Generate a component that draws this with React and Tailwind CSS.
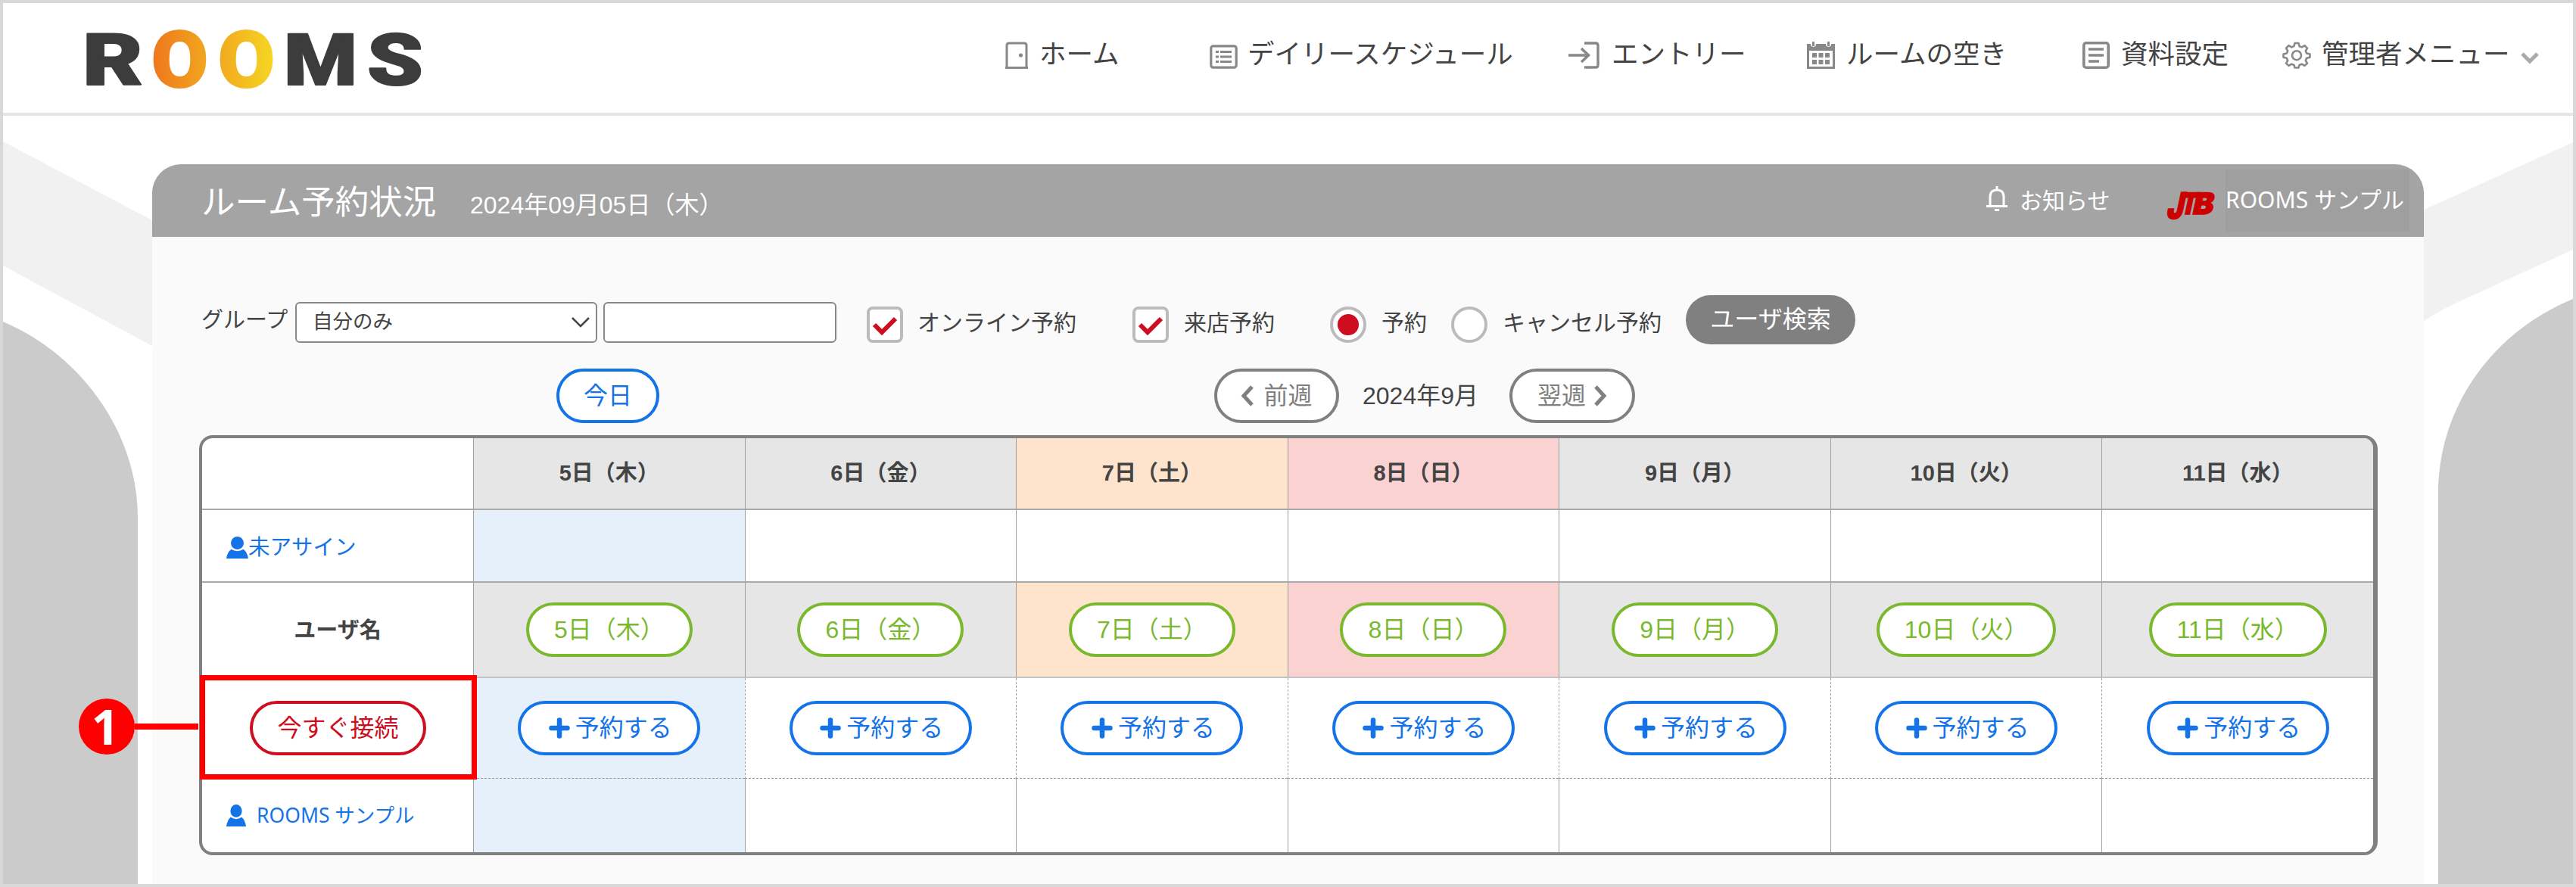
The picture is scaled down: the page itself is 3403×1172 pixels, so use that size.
const jp = "font-['Liberation_Sans','Noto_Sans_CJK_JP',sans-serif]";

const days = [
  { label: '5日（木）', head: 'bg-[#e6e6e6]', body: 'bg-[#e6f0fb]', pill: 'w-[220px]' },
  { label: '6日（金）', head: 'bg-[#e6e6e6]', body: 'bg-white', pill: 'w-[220px]' },
  { label: '7日（土）', head: 'bg-[#fee4cc]', body: 'bg-white', pill: 'w-[220px]' },
  { label: '8日（日）', head: 'bg-[#fad2d2]', body: 'bg-white', pill: 'w-[220px]' },
  { label: '9日（月）', head: 'bg-[#e6e6e6]', body: 'bg-white', pill: 'w-[220px]' },
  { label: '10日（火）', head: 'bg-[#e6e6e6]', body: 'bg-white', pill: 'w-[237px]' },
  { label: '11日（水）', head: 'bg-[#e6e6e6]', body: 'bg-white', pill: 'w-[235px]' },
];

const DoorIcon = () => (
  <svg width="30" height="36" viewBox="0 0 30 36" fill="none" stroke="#888" strokeWidth="3">
    <path d="M2 34.5V5Q2 2 5 2H25Q28 2 28 5V34.5" />
    <path d="M0 34.5H30" />
    <circle cx="20.5" cy="18" r="2.6" fill="#888" stroke="none" />
  </svg>
);

const ListIcon = () => (
  <svg width="37" height="32" viewBox="0 0 37 32" fill="none" stroke="#888" strokeWidth="3.2">
    <rect x="1.8" y="1.8" width="33.4" height="28.4" rx="3" />
    <path d="M8 9.5H12M14 9.5H29M8 16H12M14 16H29M8 22.5H12M14 22.5H29" />
  </svg>
);

const EntryIcon = () => (
  <svg width="41" height="36" viewBox="0 0 41 36" fill="none" stroke="#888" strokeWidth="3.6">
    <path d="M0 18H26M17 9L26.5 18L17 27" />
    <path d="M21 2H36Q39 2 39 5V31Q39 34 36 34H21" strokeWidth="3.4" />
  </svg>
);

const CalendarIcon = () => (
  <svg width="37" height="36" viewBox="0 0 37 36" fill="#888">
    <path fillRule="evenodd" d="M0 3H5V5Q8.5 9 12 5V3H25V5Q28.5 9 32 5V3H37V36H0ZM3 12V33H34V12Z" />
    <path d="M7 0h3v6h-3zM27 0h3v6h-3z" />
    <path d="M7 15h6v6H7zM15.5 15h6v6h-6zM24 15h6v6h-6zM7 24h6v6H7zM15.5 24h6v6h-6zM24 24h6v6h-6z" />
  </svg>
);

const DocIcon = () => (
  <svg width="36" height="36" viewBox="0 0 36 36" fill="none" stroke="#888" strokeWidth="3.6">
    <rect x="1.8" y="1.8" width="32.4" height="32.4" rx="3" />
    <path d="M8 10H28M8 18H28M8 26H22" />
  </svg>
);

const GearIcon = () => (
  <svg width="38" height="36" viewBox="0 0 38 36" fill="none" stroke="#888" strokeWidth="2.6">
    <path
      strokeLinejoin="round"
      d="M16.5 2H21.5L22.5 6L25.8 7.4L29.5 5.2L33 8.6L30.8 12.2L32.2 15.4L36.5 16.4V20.8L32.2 21.8L30.8 25L33 28.6L29.5 31.8L25.8 29.6L22.5 31L21.5 34.5H16.5L15.5 31L12.2 29.6L8.5 31.8L5 28.6L7.2 25L5.8 21.8L1.5 20.8V16.4L5.8 15.4L7.2 12.2L5 8.6L8.5 5.2L12.2 7.4L15.5 6Z"
    />
    <circle cx="19" cy="18.2" r="6" />
  </svg>
);

const PersonIcon = ({ width = 29 }) => (
  <svg width={width} height="29" viewBox="0 0 29 29" preserveAspectRatio="none" fill="#1473e6">
    <circle cx="14.5" cy="8.5" r="8.5" />
    <path d="M0 29Q1.500 20 6.500 16.800Q14.500 21.500 22.500 16.800Q27.500 20 29 29Z" />
  </svg>
);

const nav = [
  { label: 'ホーム', icon: DoorIcon, pos: 'w-[270px]', gap: 'gap-[15px]' },
  { label: 'デイリースケジュール', icon: ListIcon, pos: 'w-[474px]', gap: 'gap-[13px]', shift: 'pt-1' },
  { label: 'エントリー', icon: EntryIcon, pos: 'w-[315px]', gap: 'gap-[16px]' },
  { label: 'ルームの空き', icon: CalendarIcon, pos: 'w-[364px]', gap: 'gap-[15px]' },
  { label: '資料設定', icon: DocIcon, pos: 'w-[264px]', gap: 'gap-[15px]' },
  { label: '管理者メニュー', icon: GearIcon, pos: 'w-[315px]', gap: 'gap-[14px]' },
];

function Logo() {
  return (
    <svg width="700" height="145" viewBox="4 4 700 145" className="shrink-0 overflow-visible" fill="#3c3c3c" stroke="#3c3c3c">
      <defs>
        <linearGradient id="o1" x1="0" x2="1">
          <stop offset="0" stopColor="#ee761c" />
          <stop offset="1" stopColor="#f1a81f" />
        </linearGradient>
        <linearGradient id="o2" x1="0" x2="1">
          <stop offset="0" stopColor="#f1a81f" />
          <stop offset="1" stopColor="#f6d723" />
        </linearGradient>
      </defs>
      <g fontFamily="Roboto" fontWeight="900" fontSize="95" strokeWidth="2" strokeLinejoin="round">
        <text x="109" y="112" textLength="80" lengthAdjust="spacingAndGlyphs">R</text>
        <text x="200" y="115" fontSize="104" textLength="75" lengthAdjust="spacingAndGlyphs" fill="url(#o1)" stroke="url(#o1)">O</text>
        <text x="288" y="115" fontSize="104" textLength="75" lengthAdjust="spacingAndGlyphs" fill="url(#o2)" stroke="url(#o2)">O</text>
        <text x="375" y="112" textLength="97" lengthAdjust="spacingAndGlyphs">M</text>
        <text x="485" y="112" textLength="74" lengthAdjust="spacingAndGlyphs">S</text>
      </g>
    </svg>
  );
}

function Header() {
  return (
    <header className="flex h-[149px] shrink-0 items-start border-b-4 border-[#e5e5e5] bg-white">
      <div className="w-[1324px]"><Logo /></div>
      <nav className="flex h-[138px] items-center text-[35.5px] text-[#444]">
        {nav.map(({ label, icon: Icon, pos, gap, shift }) => (
          <a key={label} className={`flex shrink-0 items-center whitespace-nowrap ${pos} ${gap}`}>
            <span className={`shrink-0 ${shift || ''}`}><Icon /></span>
            <span>{label}</span>
          </a>
        ))}
        <svg width="24" height="16" viewBox="0 0 24 16" fill="none" stroke="#aaa" strokeWidth="5" className="mt-2">
          <path d="M2 2L12 12L22 2" />
        </svg>
      </nav>
    </header>
  );
}

function Backdrop() {
  return (
    <svg className="absolute inset-0" width="3395" height="1015" viewBox="4 153 3395 1015">
      <path fill="#f1f1f1" d="M4 187L201 291V457L4 351ZM3399 188L3202 277V424Q3222 411 3245 400L3399 330Z" />
      <path fill="#cbcbcb" d="M4 425C110 470 182 575 182 683V1168H4ZM3399 395C3290 440 3221 540 3221 652V1168H3399Z" />
    </svg>
  );
}

function PanelHead() {
  return (
    <div className="flex h-24 items-center rounded-t-[38px] bg-[#a4a4a4] pl-[65px] text-white">
      <h1 className="w-[355px] pt-1.5 text-[44.5px]">ルーム予約状況</h1>
      <span className="w-[2003px] pt-3 text-[32px]">2024年09月05日（木）</span>
      <svg width="28" height="34" viewBox="0 0 28 34" fill="none" stroke="#fff" strokeWidth="3" className="-mt-1">
        <path d="M5 25V14Q5 5 14 5Q23 5 23 14V25M0 26.5H28" />
        <path d="M14 0V4M11 31.5H17" />
      </svg>
      <span className="w-[212px] pl-4 text-[30px]">お知らせ</span>
      <svg width="76" height="82" viewBox="2864 222 76 82" className="overflow-visible" fill="#c00" stroke="#c00" fontFamily="Inter" fontWeight="900">
        <g transform="skewX(-12)" strokeWidth="1.5">
          <text x="2922" y="287" fontSize="48" textLength="22" lengthAdjust="spacingAndGlyphs">J</text>
          <text x="2939" y="281" fontSize="39" textLength="21" lengthAdjust="spacingAndGlyphs">T</text>
          <text x="2955" y="281" fontSize="39" textLength="27" lengthAdjust="spacingAndGlyphs">B</text>
        </g>
      </svg>
      <div className="flex h-[82px] w-[243px] items-center bg-[#9f9f9f] pb-1 font-['Noto_Sans','Noto_Sans_CJK_JP',sans-serif] text-[30px] whitespace-nowrap">ROOMS サンプル</div>
    </div>
  );
}

function Check() {
  return (
    <span className="flex h-12 w-12 items-center justify-center rounded-lg border-4 border-[#bbb] bg-white">
      <svg width="34" height="26" viewBox="0 0 34 26" fill="none" stroke="#ce0e20" strokeWidth="6" className="mt-1">
        <path d="M3 11L13 21L31 3" />
      </svg>
    </span>
  );
}

function Radio({ on }) {
  return (
    <span className="flex h-12 w-12 items-center justify-center rounded-full border-4 border-[#bbb] bg-white">
      {on && <span className="h-7 w-7 rounded-full bg-[#ce0e20]" />}
    </span>
  );
}

function Filters() {
  return (
    <div className="flex h-[86px] items-center pl-[65px] text-[30px] text-[#444]">
      <span className="w-[124px] text-[29px]">グループ</span>
      <div className="mt-1 flex h-[54px] w-[399px] items-center justify-between rounded-md border-2 border-[#888] bg-white pr-2 pl-[21px] text-[26.5px]">
        自分のみ
        <svg width="24" height="14" viewBox="0 0 24 14" fill="none" stroke="#444" strokeWidth="2.5">
          <path d="M1 1L12 12L23 1" />
        </svg>
      </div>
      <div className="mt-1 ml-2 h-[54px] w-[308px] rounded-md border-2 border-[#888] bg-white" />
      <div className="ml-[40px] flex w-[351px] items-center gap-[19px] pt-1"><span className="mt-1.5"><Check /></span>オンライン予約</div>
      <div className="flex w-[261px] items-center gap-[20px] pt-1"><span className="mt-1.5"><Check /></span>来店予約</div>
      <div className="flex w-[160px] items-center gap-[20px] pt-1"><span className="mt-1.5"><Radio on /></span>予約</div>
      <div className="flex w-[310px] items-center gap-[20px] pt-1"><span className="mt-1.5"><Radio /></span>キャンセル予約</div>
      <button className="-mt-1 h-[65px] w-[224px] rounded-full bg-[#808080] text-[32px] text-white">ユーザ検索</button>
    </div>
  );
}

const pillBase = 'flex h-[72px] items-center justify-center rounded-full border-4 bg-white text-[32px]';

function WeekNav() {
  return (
    <div className="flex items-center pl-[534px]">
      <button className={`${pillBase} w-[136px] border-[#1473e6] text-[#1473e6]`}>今日</button>
      <button className={`${pillBase} ml-[733px] w-[165px] gap-3 border-[#808080] text-[#808080]`}>
        <svg width="18" height="28" viewBox="0 0 18 28" fill="none" stroke="#808080" strokeWidth="5"><path d="M15 2L4 14L15 26" /></svg>
        前週
      </button>
      <span className="w-[225px] pl-[31px] text-[32px] text-[#444]">2024年9月</span>
      <button className={`${pillBase} w-[166px] gap-2.5 border-[#808080] text-[#808080]`}>
        翌週
        <svg width="18" height="28" viewBox="0 0 18 28" fill="none" stroke="#808080" strokeWidth="5"><path d="M3 2L14 14L3 26" /></svg>
      </button>
    </div>
  );
}

function Row({ height, line = 'border-b-2 border-[#aaa]', first, children }) {
  return (
    <div className={`grid grid-cols-[358px_repeat(7,minmax(0,1fr))] ${height}`}>
      <div className={`flex items-center ${line}`}>{first}</div>
      {days.map((day) => (
        <div key={day.label} className={`flex items-center justify-center border-l border-l-[#a0a0a0] ${line} ${children(day).bg}`}>
          {children(day).content}
        </div>
      ))}
    </div>
  );
}

function Schedule() {
  return (
    <div className="relative mt-4 ml-[62px] w-[2878px]">
      <div className="overflow-hidden rounded-[18px] border-4 border-r-[6px] border-[#808080] bg-white">
        <Row height="h-[95px]" first={null}>
          {(d) => ({ bg: d.head, content: <span className="text-[29px] font-bold text-[#444]">{d.label}</span> })}
        </Row>
        <Row
          height="h-[96px]"
          first={<a className="flex items-center pt-1 pl-[32px] text-[28.5px] text-[#1473e6]"><PersonIcon />未アサイン</a>}
        >
          {(d) => ({ bg: d.body, content: null })}
        </Row>
        <Row height="h-[126px]" line="border-b-2 border-[#c4c4c4]" first={<span className="w-full pt-1 text-center text-[29px] font-bold text-[#444]">ユーザ名</span>}>
          {(d) => ({ bg: d.head, content: <button className={`${pillBase} ${d.pill} border-[#7ab82e] text-[#7ab82e]`}>{d.label}</button> })}
        </Row>
        <Row
          height="h-[133px]"
          line="border-b border-dashed border-b-[#999]"
          first={<button className={`${pillBase} ml-[63px] w-[233px] border-[#ce0e20] text-[#ce0e20]`}>今すぐ接続</button>}
        >
          {(d) => ({
            bg: d.body,
            content: (
              <button className={`${pillBase} w-[241px] gap-[7px] border-[#1473e6] pl-[3px] text-[#1473e6]`}>
                <svg width="28" height="28" viewBox="0 0 28 28" stroke="#1473e6" strokeWidth="6.5" strokeLinecap="round"><path d="M14 3.5V24.5M3.5 14H24.5" /></svg>
                予約する
              </button>
            ),
          })}
        </Row>
        <Row
          height="h-[97px]"
          line=""
          first={
            <a className="flex items-center gap-[14px] pl-[32px] font-['Noto_Sans','Noto_Sans_CJK_JP',sans-serif] text-[26.5px] text-[#1473e6]">
              <PersonIcon width={26} />ROOMS サンプル
            </a>
          }
        >
          {(d) => ({ bg: d.body, content: null })}
        </Row>
      </div>

      {/* callout */}
      <div className="absolute top-[317px] left-[1px] h-[138px] w-[366px] border-[7px] border-[#f00]" />
      <div className="absolute top-[348px] left-[-159px] flex w-[158px] items-center">
        <span className="flex h-[74px] w-[74px] shrink-0 items-center justify-center rounded-full bg-[#f00] pr-1 font-['Open_Sans'] text-[64px] leading-none font-bold text-white">1</span>
        <span className="h-2 flex-1 bg-[#f00]" />
      </div>
    </div>
  );
}

export default function App() {
  return (
    <div className={`flex h-[1172px] w-[3403px] flex-col overflow-hidden border-4 border-[#d8d8d8] bg-white ${jp}`}>
      <Header />
      <div className="relative flex-1">
        <Backdrop />
        <main className="relative mt-16 ml-[197px] h-[951px] w-[3001px] rounded-t-[38px] bg-[#fafafa]">
          <PanelHead />
          <div className="pt-[68px]"><Filters /></div>
          <div className="pt-[20px]"><WeekNav /></div>
          <Schedule />
        </main>
      </div>
    </div>
  );
}
